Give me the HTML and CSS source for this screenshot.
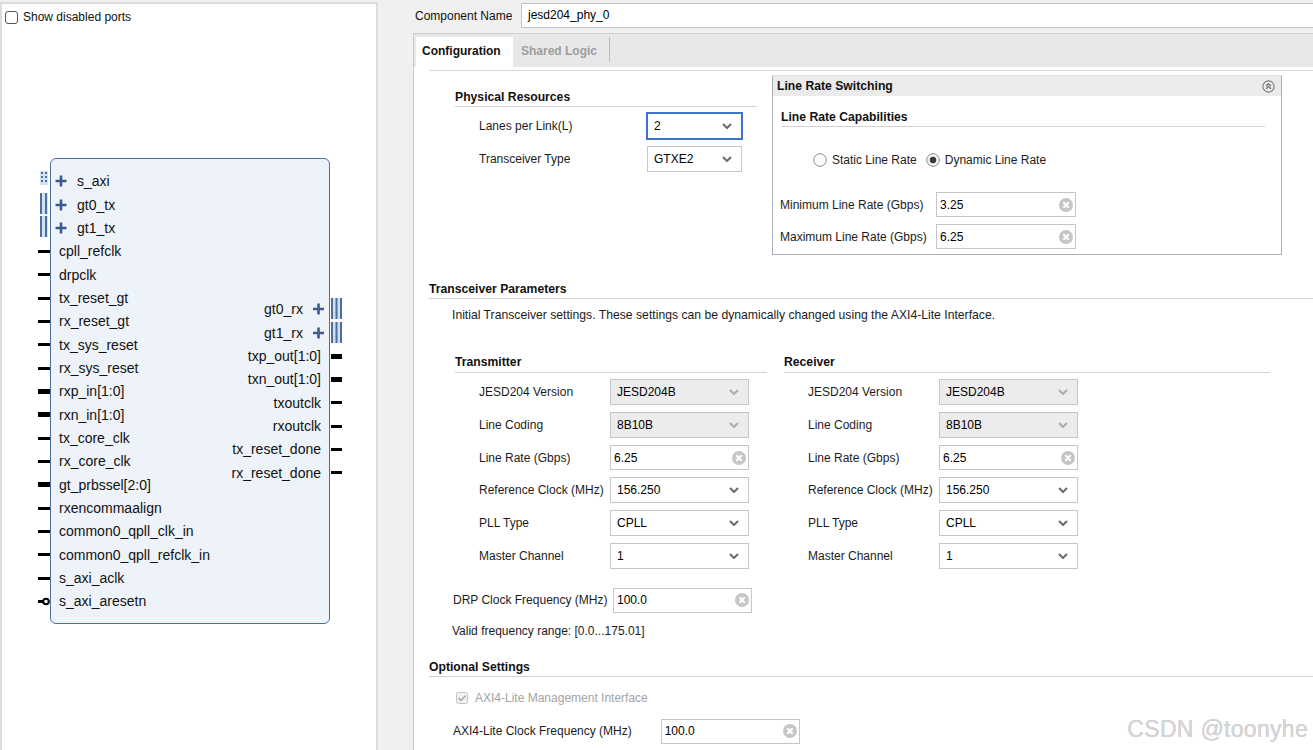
FILE: index.html
```html
<!DOCTYPE html>
<html>
<head>
<meta charset="utf-8">
<link rel="stylesheet" href="styles.css">
</head>
<body>
<div class="app">
  <div class="left">
    <div class="show-disabled"><span class="cb"></span><span>Show disabled ports</span></div>
    <div class="block">
      <div class="col col-l">
        <div class="port ifc"><svg class="ipin" width="8" height="14" viewBox="0 0 8 14"><rect width="8" height="14" fill="#d3e0f0"/><g fill="#4a6fa5"><rect x="1" y="1" width="2" height="2"/><rect x="1" y="5" width="2" height="2"/><rect x="1" y="9" width="2" height="2"/><rect x="5" y="1" width="2" height="2"/><rect x="5" y="5" width="2" height="2"/><rect x="5" y="9" width="2" height="2"/></g></svg><svg class="plus" width="12" height="12" viewBox="0 0 12 12"><path d="M6 0.5v11M0.5 6h11" stroke="#3b5b8d" stroke-width="2.6"/></svg><span>s_axi</span></div>
        <div class="port ifc"><svg class="ipin tall" width="8" height="21" viewBox="0 0 8 21"><rect width="8" height="21" fill="#d3e0f0"/><rect x="0" y="0" width="2" height="21" fill="#4a6fa5"/><rect x="5" y="0" width="2" height="21" fill="#4a6fa5"/></svg><svg class="plus" width="12" height="12" viewBox="0 0 12 12"><path d="M6 0.5v11M0.5 6h11" stroke="#3b5b8d" stroke-width="2.6"/></svg><span>gt0_tx</span></div>
        <div class="port ifc"><svg class="ipin tall" width="8" height="21" viewBox="0 0 8 21"><rect width="8" height="21" fill="#d3e0f0"/><rect x="0" y="0" width="2" height="21" fill="#4a6fa5"/><rect x="5" y="0" width="2" height="21" fill="#4a6fa5"/></svg><svg class="plus" width="12" height="12" viewBox="0 0 12 12"><path d="M6 0.5v11M0.5 6h11" stroke="#3b5b8d" stroke-width="2.6"/></svg><span>gt1_tx</span></div>
        <div class="port"><i class="pin"></i>cpll_refclk</div>
        <div class="port"><i class="pin"></i>drpclk</div>
        <div class="port"><i class="pin"></i>tx_reset_gt</div>
        <div class="port"><i class="pin"></i>rx_reset_gt</div>
        <div class="port"><i class="pin"></i>tx_sys_reset</div>
        <div class="port"><i class="pin"></i>rx_sys_reset</div>
        <div class="port"><i class="pin bus"></i>rxp_in[1:0]</div>
        <div class="port"><i class="pin bus"></i>rxn_in[1:0]</div>
        <div class="port"><i class="pin"></i>tx_core_clk</div>
        <div class="port"><i class="pin"></i>rx_core_clk</div>
        <div class="port"><i class="pin bus"></i>gt_prbssel[2:0]</div>
        <div class="port"><i class="pin"></i>rxencommaalign</div>
        <div class="port"><i class="pin"></i>common0_qpll_clk_in</div>
        <div class="port"><i class="pin"></i>common0_qpll_refclk_in</div>
        <div class="port"><i class="pin"></i>s_axi_aclk</div>
        <div class="port"><svg class="npin" width="13" height="9" viewBox="0 0 13 9"><rect x="0" y="3" width="5" height="3" fill="#000"/><circle cx="8" cy="4.5" r="2.8" fill="#fff" stroke="#000" stroke-width="2"/></svg>s_axi_aresetn</div>
      </div>
      <div class="col col-r">
        <div class="port ifc"><span>gt0_rx</span><svg class="plus" width="13" height="12" viewBox="0 0 13 12"><path d="M6.5 0.5v11M1 6h11" stroke="#3b5b8d" stroke-width="2.6"/></svg><svg class="ipin" width="11" height="21" viewBox="0 0 11 21"><rect width="11" height="21" fill="#d3e0f0"/><rect x="0" y="0" width="2" height="21" fill="#4a6fa5"/><rect x="4.5" y="0" width="2" height="21" fill="#4a6fa5"/><rect x="9" y="0" width="2" height="21" fill="#4a6fa5"/></svg></div>
        <div class="port ifc"><span>gt1_rx</span><svg class="plus" width="13" height="12" viewBox="0 0 13 12"><path d="M6.5 0.5v11M1 6h11" stroke="#3b5b8d" stroke-width="2.6"/></svg><svg class="ipin" width="11" height="21" viewBox="0 0 11 21"><rect width="11" height="21" fill="#d3e0f0"/><rect x="0" y="0" width="2" height="21" fill="#4a6fa5"/><rect x="4.5" y="0" width="2" height="21" fill="#4a6fa5"/><rect x="9" y="0" width="2" height="21" fill="#4a6fa5"/></svg></div>
        <div class="port">txp_out[1:0]<i class="pin bus"></i></div>
        <div class="port">txn_out[1:0]<i class="pin bus"></i></div>
        <div class="port">txoutclk<i class="pin"></i></div>
        <div class="port">rxoutclk<i class="pin"></i></div>
        <div class="port">tx_reset_done<i class="pin"></i></div>
        <div class="port">rx_reset_done<i class="pin"></i></div>
      </div>
    </div>
  </div>

  <div class="right">
    <div class="comp-row">
      <span class="comp-label">Component Name</span>
      <div class="comp-input">jesd204_phy_0</div>
    </div>
    <div class="tabpanel">
      <div class="tabs">
        <div class="tab active">Configuration</div>
        <div class="tab">Shared Logic</div>
      </div>
      <div class="content">
        <div class="sep"></div>
        <div class="top-sec">
          <div class="phys">
            <div class="grp-head">Physical Resources</div>
            <div class="frow">
              <span class="flabel">Lanes per Link(L)</span>
              <div class="sel focus w95"><span>2</span><svg class="chev" width="10" height="6" viewBox="0 0 10 6"><path d="M1 1l4 4 4-4" fill="none" stroke="#6b6b6b" stroke-width="2"/></svg></div>
            </div>
            <div class="frow">
              <span class="flabel">Transceiver Type</span>
              <div class="sel w95"><span>GTXE2</span><svg class="chev" width="10" height="6" viewBox="0 0 10 6"><path d="M1 1l4 4 4-4" fill="none" stroke="#6b6b6b" stroke-width="2"/></svg></div>
            </div>
          </div>
          <div class="lrs">
            <div class="lrs-head"><span>Line Rate Switching</span><svg width="13" height="13" viewBox="0 0 13 13"><circle cx="6.5" cy="6.5" r="5.6" fill="#ececec" stroke="#7d7d7d" stroke-width="1.1"/><path d="M4 6l2.5-2.3L9 6M4 8.8l2.5-2.3L9 8.8" fill="none" stroke="#6a6a6a" stroke-width="1.2"/></svg></div>
            <div class="lrs-body">
              <div class="grp-head lrc">Line Rate Capabilities</div>
              <div class="radios">
                <span class="radio"><svg width="14" height="14" viewBox="0 0 14 14"><circle cx="7" cy="7" r="6.3" fill="#fbfbfb" stroke="#8a8a8a"/></svg>Static Line Rate</span>
                <span class="radio"><svg width="14" height="14" viewBox="0 0 14 14"><circle cx="7" cy="7" r="6.3" fill="#f4f4f4" stroke="#8a8a8a"/><circle cx="7" cy="7" r="3.2" fill="#3a3a3a"/></svg>Dynamic Line Rate</span>
              </div>
              <div class="frow lr1">
                <span class="flabel w156">Minimum Line Rate (Gbps)</span>
                <div class="inp w140"><span>3.25</span><svg class="clr" width="14" height="14" viewBox="0 0 14 14"><circle cx="7" cy="7" r="7" fill="#c6c6c6"/><path d="M4.3 4.3l5.4 5.4M9.7 4.3l-5.4 5.4" stroke="#fff" stroke-width="2"/></svg></div>
              </div>
              <div class="frow">
                <span class="flabel w156">Maximum Line Rate (Gbps)</span>
                <div class="inp w140"><span>6.25</span><svg class="clr" width="14" height="14" viewBox="0 0 14 14"><circle cx="7" cy="7" r="7" fill="#c6c6c6"/><path d="M4.3 4.3l5.4 5.4M9.7 4.3l-5.4 5.4" stroke="#fff" stroke-width="2"/></svg></div>
              </div>
            </div>
          </div>
        </div>

        <div class="sec-head tp">Transceiver Parameters</div>
        <div class="desc">Initial Transceiver settings. These settings can be dynamically changed using the AXI4-Lite Interface.</div>

        <div class="txrx">
          <div class="grp tx">
            <div class="grp-head">Transmitter</div>
            <div class="frow r1"><span class="flabel w155">JESD204 Version</span><div class="sel dis w139"><span>JESD204B</span><svg class="chev" width="10" height="6" viewBox="0 0 10 6"><path d="M1 1l4 4 4-4" fill="none" stroke="#acacac" stroke-width="2"/></svg></div></div>
            <div class="frow"><span class="flabel w155">Line Coding</span><div class="sel dis w139"><span>8B10B</span><svg class="chev" width="10" height="6" viewBox="0 0 10 6"><path d="M1 1l4 4 4-4" fill="none" stroke="#acacac" stroke-width="2"/></svg></div></div>
            <div class="frow"><span class="flabel w155">Line Rate (Gbps)</span><div class="inp w139"><span>6.25</span><svg class="clr" width="14" height="14" viewBox="0 0 14 14"><circle cx="7" cy="7" r="7" fill="#c6c6c6"/><path d="M4.3 4.3l5.4 5.4M9.7 4.3l-5.4 5.4" stroke="#fff" stroke-width="2"/></svg></div></div>
            <div class="frow"><span class="flabel w155">Reference Clock (MHz)</span><div class="sel w139"><span>156.250</span><svg class="chev" width="10" height="6" viewBox="0 0 10 6"><path d="M1 1l4 4 4-4" fill="none" stroke="#6b6b6b" stroke-width="2"/></svg></div></div>
            <div class="frow"><span class="flabel w155">PLL Type</span><div class="sel w139"><span>CPLL</span><svg class="chev" width="10" height="6" viewBox="0 0 10 6"><path d="M1 1l4 4 4-4" fill="none" stroke="#6b6b6b" stroke-width="2"/></svg></div></div>
            <div class="frow"><span class="flabel w155">Master Channel</span><div class="sel w139"><span>1</span><svg class="chev" width="10" height="6" viewBox="0 0 10 6"><path d="M1 1l4 4 4-4" fill="none" stroke="#6b6b6b" stroke-width="2"/></svg></div></div>
          </div>
          <div class="grp rx">
            <div class="grp-head">Receiver</div>
            <div class="frow r1"><span class="flabel w155">JESD204 Version</span><div class="sel dis w139"><span>JESD204B</span><svg class="chev" width="10" height="6" viewBox="0 0 10 6"><path d="M1 1l4 4 4-4" fill="none" stroke="#acacac" stroke-width="2"/></svg></div></div>
            <div class="frow"><span class="flabel w155">Line Coding</span><div class="sel dis w139"><span>8B10B</span><svg class="chev" width="10" height="6" viewBox="0 0 10 6"><path d="M1 1l4 4 4-4" fill="none" stroke="#acacac" stroke-width="2"/></svg></div></div>
            <div class="frow"><span class="flabel w155">Line Rate (Gbps)</span><div class="inp w139"><span>6.25</span><svg class="clr" width="14" height="14" viewBox="0 0 14 14"><circle cx="7" cy="7" r="7" fill="#c6c6c6"/><path d="M4.3 4.3l5.4 5.4M9.7 4.3l-5.4 5.4" stroke="#fff" stroke-width="2"/></svg></div></div>
            <div class="frow"><span class="flabel w155">Reference Clock (MHz)</span><div class="sel w139"><span>156.250</span><svg class="chev" width="10" height="6" viewBox="0 0 10 6"><path d="M1 1l4 4 4-4" fill="none" stroke="#6b6b6b" stroke-width="2"/></svg></div></div>
            <div class="frow"><span class="flabel w155">PLL Type</span><div class="sel w139"><span>CPLL</span><svg class="chev" width="10" height="6" viewBox="0 0 10 6"><path d="M1 1l4 4 4-4" fill="none" stroke="#6b6b6b" stroke-width="2"/></svg></div></div>
            <div class="frow"><span class="flabel w155">Master Channel</span><div class="sel w139"><span>1</span><svg class="chev" width="10" height="6" viewBox="0 0 10 6"><path d="M1 1l4 4 4-4" fill="none" stroke="#6b6b6b" stroke-width="2"/></svg></div></div>
          </div>
        </div>

        <div class="frow drp">
          <span class="flabel w160">DRP Clock Frequency (MHz)</span>
          <div class="inp w139"><span>100.0</span><svg class="clr" width="14" height="14" viewBox="0 0 14 14"><circle cx="7" cy="7" r="7" fill="#c6c6c6"/><path d="M4.3 4.3l5.4 5.4M9.7 4.3l-5.4 5.4" stroke="#fff" stroke-width="2"/></svg></div>
        </div>
        <div class="valid">Valid frequency range: [0.0...175.01]</div>

        <div class="sec-head opt">Optional Settings</div>
        <div class="chk-row"><svg width="12" height="12" viewBox="0 0 12 12"><rect x="0.5" y="0.5" width="11" height="11" rx="2" fill="#f2f2f2" stroke="#c2c2c2"/><path d="M2.6 6.2l2.3 2.3 4.6-4.8" fill="none" stroke="#b0b0b0" stroke-width="1.8"/></svg><span>AXI4-Lite Management Interface</span></div>
        <div class="frow axi">
          <span class="flabel w207">AXI4-Lite Clock Frequency (MHz)</span>
          <div class="inp w139"><span>100.0</span><svg class="clr" width="14" height="14" viewBox="0 0 14 14"><circle cx="7" cy="7" r="7" fill="#c6c6c6"/><path d="M4.3 4.3l5.4 5.4M9.7 4.3l-5.4 5.4" stroke="#fff" stroke-width="2"/></svg></div>
        </div>
      </div>
    </div>
    <div class="watermark">CSDN @toonyhe</div>
  </div>
</div>
</body>
</html>
```

FILE: styles.css
```css
* { box-sizing: border-box; }
html, body { margin: 0; padding: 0; }
body {
  width: 1313px;
  height: 750px;
  overflow: hidden;
  background: #f0f0f0;
  font-family: "Liberation Sans", Arial, sans-serif;
  font-size: 12px;
  color: #1c1c1c;
}
.app { display: flex; height: 750px; }

/* ---------- left diagram panel ---------- */
.left {
  flex: none;
  width: 378px;
  height: 760px;
  margin-top: 2px;
  background: #fff;
  border: 2px solid #dcdcdc;
}
.show-disabled {
  height: 26px;
  display: flex;
  align-items: center;
  gap: 5px;
  padding-left: 3px;
  font-size: 12px;
  color: #111;
}
.cb {
  width: 13px;
  height: 13px;
  border: 1px solid #555;
  border-radius: 3px;
  background: #fff;
}
.block {
  width: 280px;
  height: 466px;
  margin: 128px 0 0 48px;
  background: #eef3fa;
  border: 1px solid #4a6fa5;
  border-radius: 6px;
  display: flex;
  justify-content: space-between;
  font-size: 14px;
  color: #111;
}
.col-l { padding-top: 10.8px; }
.col-r { padding-top: 138.8px; }
.port {
  position: relative;
  height: 23.33px;
  display: flex;
  align-items: center;
  white-space: nowrap;
}
.col-l .port { padding-left: 8px; }
.col-l .port.ifc { padding-left: 4px; }
.col-r .port { justify-content: flex-end; padding-right: 8px; }
.col-r .port.ifc { padding-right: 4px; }
.col-l .plus { margin-right: 10px; }
.col-r .plus { margin-left: 9px; }
.pin {
  position: absolute;
  top: 50%;
  height: 3px;
  margin-top: -1.5px;
  background: #000;
}
.pin.bus { height: 5px; margin-top: -2.5px; }
.col-l .pin { left: -13px; width: 12px; }
.col-r .pin { right: -13px; width: 11px; }
.npin { position: absolute; left: -13px; top: 50%; margin-top: -4.5px; }
.ipin { position: absolute; top: 50%; }
.col-l .ipin { left: -11px; margin-top: -10px; }
.col-l .ipin.tall { margin-top: -12px; }
.col-r .ipin { right: -13px; margin-top: -11px; }

/* ---------- right side ---------- */
.right { flex: 1; position: relative; padding-left: 35px; }
.comp-row {
  display: flex;
  align-items: center;
  height: 25px;
  margin-top: 3px;
}
.comp-label { width: 108px; padding-left: 2px; color: #111; }
.comp-input {
  flex: 1;
  height: 25px;
  background: #fff;
  border: 1px solid #c3c3c3;
  border-right: none;
  padding-left: 6px;
  line-height: 23px;
  color: #000;
}
.tabpanel {
  margin-top: 5px;
  border-top: 1px solid #d0d0d0;
  border-left: 1px solid #c8c8c8;
  background: #fff;
  height: 720px;
}
.tabs {
  height: 33px;
  background: #e8e8e8;
  padding: 3px 0 0 2px;
  display: flex;
}
.tab {
  height: 30px;
  line-height: 28px;
  font-weight: bold;
  font-size: 12px;
}
.tab.active { width: 97px; padding-left: 6px; background: #fff; color: #111; }
.tab:not(.active) {
  width: 97px;
  padding-left: 8px;
  color: #9d9d9d;
  height: 25px;
  border-right: 1px solid #bdbdbd;
}
.content { position: relative; }
.sep { margin: 3px 0 0 15px; border-top: 1px solid #d8d8d8; }
.top-sec { display: flex; margin-top: 4px; }
.phys { width: 302px; margin-left: 41px; padding-top: 15px; }
.grp-head {
  font-weight: bold;
  font-size: 12.2px;
  line-height: 14px;
  padding-bottom: 2px;
  border-bottom: 1px solid #d3d3d3;
  color: #111;
}
.frow { display: flex; align-items: center; height: 26px; margin-top: 7px; }
.phys .grp-head + .frow { margin-top: 6px; }
.flabel { flex: none; color: #1c1c1c; white-space: nowrap; }
.phys .flabel { width: 192px; padding-left: 24px; }
.w156 { width: 156px; }
.w155 { width: 155px; }
.w160 { width: 160px; }
.w207 { width: 207.7px; }
.w95 { width: 95px; }
.w140 { width: 140px; }
.w139 { width: 139px; }
.sel {
  height: 26px;
  display: flex;
  align-items: center;
  justify-content: space-between;
  border: 1px solid #c6c6c6;
  background: #fff;
  padding: 0 9px 0 6px;
  color: #000;
}
.sel.dis { background: #ececec; }
.sel.focus { border-color: #3d74c8; box-shadow: 0 0 0 1px #3d74c8; }
.inp {
  height: 25px;
  display: flex;
  align-items: center;
  justify-content: space-between;
  border: 1px solid #c6c6c6;
  background: #fff;
  padding: 0 2px 0 3px;
  color: #000;
}
.lrs {
  width: 510px;
  height: 180px;
  margin-left: 15px;
  border: 1px solid #a9b0bc;
  border-top: 1px solid #e2e2e2;
}
.lrs-head {
  height: 20px;
  background: #ebebeb;
  display: flex;
  align-items: center;
  justify-content: space-between;
  padding: 0 6px 0 4px;
  font-weight: bold;
  font-size: 12.2px;
  color: #111;
}
.lrs-head svg { margin-top: 0; }
.lrs-body { padding: 0 16px 0 8px; }
.grp-head.lrc { margin-top: 14px; }
.radios { display: flex; align-items: center; height: 16px; margin-top: 25px; padding-left: 32px; gap: 0; }
.radio { display: flex; align-items: center; gap: 5px; margin-right: 9px; }
.lrs .frow { margin-left: -1px; }
.lrs .frow { height: 25px; }
.frow.lr1 { margin-top: 24px; }
.sec-head {
  margin-left: 15px;
  font-weight: bold;
  font-size: 12.2px;
  line-height: 14px;
  padding-bottom: 2px;
  border-bottom: 1px solid #d3d3d3;
  color: #111;
}
.sec-head.tp { margin-top: 27px; }
.desc { margin: 9px 0 0 38px; line-height: 14px; font-size: 12.2px; }
.txrx { display: flex; margin-left: 41px; margin-top: 33px; }
.grp.tx { width: 312px; }
.grp.rx { width: 486px; margin-left: 17px; }
.grp .grp-head { padding-bottom: 3px; }
.grp .frow { margin-top: 6.8px; }
.grp .frow.r1 { margin-top: 6px; }
.grp .frow .inp { height: 25px; }
.grp .flabel { padding-left: 24px; }
.frow.drp { margin: 19px 0 0 39px; height: 25px; }
.valid { margin: 10.7px 0 0 38px; line-height: 14px; }
.sec-head.opt { margin-top: 22px; }
.chk-row {
  margin: 14px 0 0 42px;
  height: 14px;
  display: flex;
  align-items: center;
  gap: 7px;
  color: #a3a3a3;
}
.frow.axi { margin: 14.3px 0 0 39px; height: 25px; }
.watermark {
  position: absolute;
  right: 5px;
  top: 716px;
  font-size: 23px;
  color: #d6d6d6;
  text-shadow: 0 0 0.5px #adadad;
  letter-spacing: 0.3px;
}
```
